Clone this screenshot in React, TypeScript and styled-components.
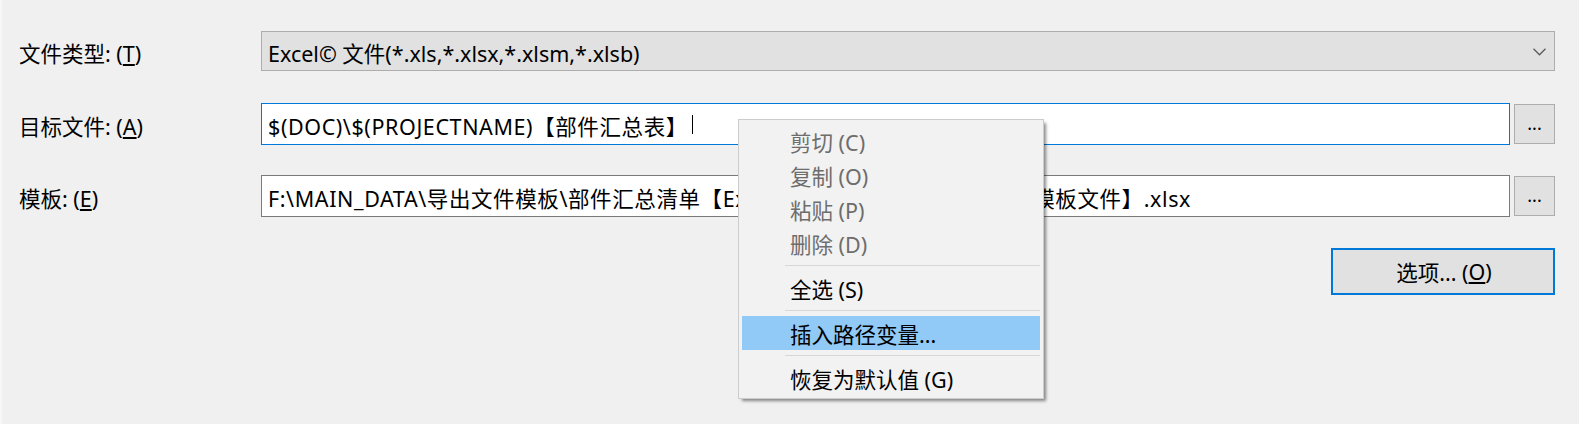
import React from "react";
import styled, { createGlobalStyle } from "styled-components";

const GlobalStyle = createGlobalStyle`
  html, body {
    margin: 0;
    padding: 0;
    background: #f0f0f0;
  }
  body {
    font-family: "Noto Sans", "Noto Sans CJK SC", sans-serif;
    font-size: 21.5px;
    color: #000;
  }
`;

const Dialog = styled.div`
  position: relative;
  width: 1579px;
  height: 424px;
  box-sizing: border-box;
  padding: 31px 24px 0 17px;
  border-left: 2px solid #f7f7f7;
  background: #f0f0f0;
  display: flex;
  flex-direction: column;
  overflow: hidden;
`;

const Row = styled.div<{ $gap: number; $height: number }>`
  display: grid;
  grid-template-columns: 242px 1fr;
  align-items: center;
  height: ${(p) => p.$height}px;
  margin-top: ${(p) => p.$gap}px;
`;

const Label = styled.div`
  white-space: nowrap;
  padding-top: 3px;
`;

const Combo = styled.div`
  height: 40px;
  box-sizing: border-box;
  background: #e1e1e1;
  border: 1px solid #adadad;
  display: flex;
  align-items: center;
  justify-content: space-between;
  padding: 2px 8px 0 6px;
  white-space: nowrap;
`;

const FieldLine = styled.div`
  display: flex;
  align-items: center;
  gap: 4px;
  height: 100%;
`;

const TextBox = styled.div<{ $focused?: boolean }>`
  flex: 1;
  min-width: 0;
  height: 42px;
  box-sizing: border-box;
  background: #fff;
  border: 1px solid ${(p) => (p.$focused ? "#0078d7" : "#7a7a7a")};
  display: flex;
  align-items: center;
  padding: 2px 6px 0;
  letter-spacing: 0.6px;
  white-space: nowrap;
  overflow: hidden;
`;

const Caret = styled.span`
  display: inline-block;
  width: 1px;
  height: 19px;
  background: #000;
  margin-left: 4px;
  margin-bottom: 2px;
`;

const BrowseButton = styled.div`
  width: 41px;
  height: 40px;
  box-sizing: border-box;
  background: #e1e1e1;
  border: 1px solid #adadad;
  display: flex;
  align-items: center;
  justify-content: center;
  font-size: 18px;
  padding-bottom: 2px;
`;

const Actions = styled.div`
  display: flex;
  justify-content: flex-end;
  margin-top: 31px;
`;

const OptionsButton = styled.div`
  width: 224px;
  height: 47px;
  box-sizing: border-box;
  background: #e1e1e1;
  border: 2px solid #0078d7;
  display: flex;
  align-items: center;
  justify-content: center;
  padding-left: 2px;
`;

const Menu = styled.div`
  position: absolute;
  left: 736px;
  top: 119px;
  width: 306px;
  box-sizing: border-box;
  background: #f2f2f2;
  border: 1px solid #cccccc;
  box-shadow: 3px 3px 3px -1px rgba(0, 0, 0, 0.45);
  padding: 4px 3px 3px 3px;
  display: flex;
  flex-direction: column;
`;

const MenuItem = styled.div<{ $disabled?: boolean; $active?: boolean }>`
  height: 34px;
  display: flex;
  align-items: center;
  padding-left: 48px;
  padding-top: 1px;
  box-sizing: border-box;
  color: ${(p) => (p.$disabled ? "#6d6d6d" : "#000")};
  background: ${(p) => (p.$active ? "#91c9f7" : "transparent")};
  white-space: nowrap;
`;

const Separator = styled.div`
  height: 1px;
  background: #d7d7d7;
  margin: 5px 0 5px 43px;
`;

const Chevron = () => (
  <svg width="13" height="8" viewBox="0 0 13 8">
    <polyline points="0.5,0.8 6.5,6.8 12.5,0.8" fill="none" stroke="#5c5c5c" strokeWidth="1.3" />
  </svg>
);

export default function App() {
  return (
    <>
      <GlobalStyle />
      <Dialog>
        <Row $gap={0} $height={40}>
          <Label>
            文件类型: (<u>T</u>)
          </Label>
          <Combo>
            <span>Excel© 文件(*.xls,*.xlsx,*.xlsm,*.xlsb)</span>
            <Chevron />
          </Combo>
        </Row>
        <Row $gap={32} $height={42}>
          <Label>
            目标文件: (<u>A</u>)
          </Label>
          <FieldLine>
            <TextBox $focused>
              $(DOC)\$(PROJECTNAME)【部件汇总表】
              <Caret />
            </TextBox>
            <BrowseButton>...</BrowseButton>
          </FieldLine>
        </Row>
        <Row $gap={30} $height={42}>
          <Label>
            模板: (<u>E</u>)
          </Label>
          <FieldLine>
            <TextBox>F:\MAIN_DATA\导出文件模板\部件汇总清单【Excel】【部件汇总清单导出2】【模板文件】.xlsx</TextBox>
            <BrowseButton>...</BrowseButton>
          </FieldLine>
        </Row>
        <Actions>
          <OptionsButton>
            选项... (<u>O</u>)
          </OptionsButton>
        </Actions>
        <Menu>
          <MenuItem $disabled>剪切 (C)</MenuItem>
          <MenuItem $disabled>复制 (O)</MenuItem>
          <MenuItem $disabled>粘贴 (P)</MenuItem>
          <MenuItem $disabled>删除 (D)</MenuItem>
          <Separator />
          <MenuItem>全选 (S)</MenuItem>
          <Separator />
          <MenuItem $active>插入路径变量...</MenuItem>
          <Separator />
          <MenuItem>恢复为默认值 (G)</MenuItem>
        </Menu>
      </Dialog>
    </>
  );
}
